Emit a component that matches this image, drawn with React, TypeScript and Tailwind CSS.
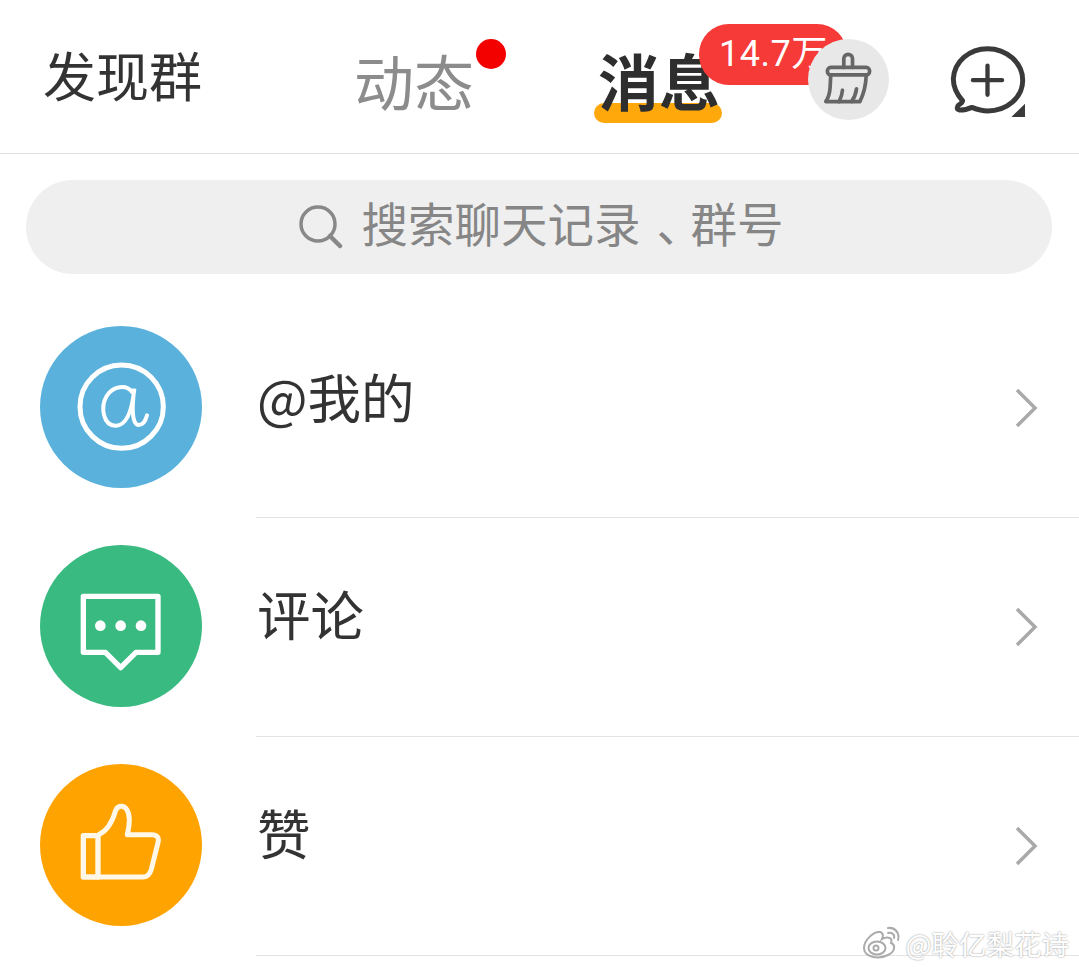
const font = "font-['Noto_Sans_CJK_SC','Noto_Sans',sans-serif]";

const ChevronIcon = () => (
    <svg width="24" height="42" viewBox="0 0 24 42" fill="none" className="mr-[41px] shrink-0">
        <path d="M3 3 L21 21 L3 39" stroke="#a9a9a9" strokeWidth="3.5" />
    </svg>
);

const AtIcon = () => (
    <svg viewBox="30 18 486 486" className="w-full h-full" fill="none" stroke="#fff">
        <circle cx="275" cy="260" r="125" strokeWidth="15" />
        <path
            d="M306 216 C290 194 250 196 230 228 C210 262 220 316 256 317 C288 318 306 276 313 206 C306 256 304 314 326 315 C338 315 347 302 351 286"
            strokeWidth="12"
            strokeLinecap="round"
        />
    </svg>
);

const CommentIcon = () => (
    <svg viewBox="30 28 486 486" className="w-full h-full" fill="none" stroke="#fff">
        <path d="M160 182 H384 V350 H318 L272 396 L226 350 H160 Z" strokeWidth="16" strokeLinejoin="round" />
        <g fill="#fff" stroke="none">
            <circle cx="211" cy="270" r="16" />
            <circle cx="272" cy="270" r="16" />
            <circle cx="333" cy="270" r="16" />
        </g>
    </svg>
);

const ThumbIcon = () => (
    <svg viewBox="30 28 486 486" className="w-full h-full" fill="none" stroke="#fff8e8" strokeLinejoin="round">
        <path d="M160 243 H204 V367 H160 Z" strokeWidth="16" />
        <path
            d="M204 367 H338 C352 367 360 358 364 344 L384 264 C388 248 380 240 366 240 H292 C300 205 300 178 290 164 C280 150 262 152 256 170 C248 198 236 226 206 240"
            strokeWidth="15"
            strokeLinecap="round"
        />
    </svg>
);

const BroomIcon = () => (
    <svg viewBox="385 87 242 242" className="w-full h-full" fill="none" stroke="#666" strokeWidth="11" strokeLinejoin="round" strokeLinecap="round">
        <path d="M492 172 V146 a13 13 0 0 1 26 0 V172" />
        <rect x="443" y="172" width="126" height="22" rx="10" />
        <path d="M453 195 L451 232 C450 250 446 262 438 274 H540 C552 250 558 225 559 195" />
        <path d="M478 274 C484 262 487 252 488 240 M515 274 C524 262 528 250 530 236" />
    </svg>
);

const PlusBubbleIcon = () => (
    <svg viewBox="800 100 250 235" className="w-[83px] h-[78px] shrink-0" fill="none">
        <path
            d="M847 274 C825 250 819 225 819 208 C822 155 868 117 922 117 C980 117 1028 160 1028 212 C1028 265 980 305 922 305 C905 305 890 300 875 294 C865 298 850 303 838 302 C828 300 830 292 835 287 C842 283 846 278 847 274 Z"
            stroke="#3a3a3a"
            strokeWidth="15"
            strokeLinejoin="round"
        />
        <path d="M878 212 H966 M922 168 V256" stroke="#3a3a3a" strokeWidth="13" strokeLinecap="round" />
        <path d="M994 323 L1035 283 V323 Z" fill="#3a3a3a" />
    </svg>
);

const WeiboIcon = () => (
    <svg viewBox="0 0 40 34" className="w-[40px] h-[34px] mr-[3px] shrink-0" fill="none" stroke="#ababab" strokeWidth="2" strokeLinecap="round">
        <path d="M2 22 C2 14 12 5 18 6 C22 7 21 11 20 13 C26 10 31 12 29 17 C34 19 33 26 26 29 C16 34 2 31 2 22 Z" />
        <ellipse cx="15" cy="22" rx="8.5" ry="6.5" />
        <circle cx="14" cy="22" r="2.5" />
        <path d="M26 2 C33 1 38 7 36 14 M26 7 C30 6 33 9 32 12" />
    </svg>
);

const rows = [
    { name: '@我的', bg: 'bg-[#5ab2dc]', icon: <AtIcon />, lift: 'pb-[24px]' },
    { name: '评论', bg: 'bg-[#38ba80]', icon: <CommentIcon />, lift: 'pb-[28px]' },
    { name: '赞', bg: 'bg-[#ffa300]', icon: <ThumbIcon />, lift: 'pb-[28px]' },
];

const App = () => {
    return (
        <div className={`relative w-[1079px] h-[967px] overflow-hidden bg-white text-[#333] ${font}`}>
            <header className="relative flex items-start h-[154px] border-b border-[#e3e3e3]">
                <h1 className="ml-[43px] mt-[35px] text-[53px] leading-[78px] font-normal text-[#333]">发现群</h1>

                <div className="relative ml-[152px] mt-[36px] text-[60px] leading-[88px] text-[#8c8c8c]">
                    动态
                    <span className="absolute left-[122px] top-[3px] w-[30px] h-[30px] rounded-full bg-[#f30000]" />
                </div>

                <div className="relative ml-[124px] mt-[36px] text-[61px] leading-[88px] font-bold text-[#2e2e2e]">
                    <span className="absolute left-[-4px] top-[67px] w-[128px] h-[20px] rounded-[10px] bg-[#ffa80b]" />
                    <span className="relative">消息</span>
                    <span className="absolute left-[101px] top-[-12px] w-[148px] h-[61px] rounded-[30px] bg-[#f53a38] pl-[20px] text-[36px] leading-[61px] font-normal tracking-[0.5px] text-white whitespace-nowrap font-['Roboto','Noto_Sans_CJK_SC',sans-serif]">
                        14.7万
                    </span>
                    <span className="absolute left-[210px] top-[3px] w-[81px] h-[81px] rounded-full bg-[#e8e8e8]">
                        <BroomIcon />
                    </span>
                </div>

                <div className="ml-auto mr-[49px] mt-[43px]">
                    <PlusBubbleIcon />
                </div>
            </header>

            <div className="px-[26px] pt-[26px] pb-[25px] pr-[27px]">
                <div className="flex items-center justify-center h-[94px] rounded-[47px] bg-[#efefef] pl-[2px] text-[#868686]">
                    <svg width="46" height="46" viewBox="0 0 46 46" fill="none" className="mr-[19px]">
                        <circle cx="21" cy="20" r="17" stroke="#888" strokeWidth="3.5" />
                        <path d="M33 32 L43 42" stroke="#888" strokeWidth="4.5" strokeLinecap="round" />
                    </svg>
                    <span className="pb-[10px] text-[46.5px] leading-[68px] whitespace-pre">
                        搜索聊天记录<span className="ml-[16px] tracking-[-12.5px]">、</span>群号
                    </span>
                </div>
            </div>

            <ul>
                {rows.map(({ name, bg, icon, lift }) => (
                    <li key={name} className="flex pl-[40px] h-[219px]">
                        <div className={`w-[162px] h-[162px] mt-[27px] rounded-full shrink-0 ${bg}`}>{icon}</div>
                        <div className="flex-1 flex items-center ml-[54px] border-b border-[#e3e3e3]">
                            <span className={`flex-1 pl-[1px] text-[53.5px] leading-[78px] text-[#333] ${lift}`}>{name}</span>
                            <ChevronIcon />
                        </div>
                    </li>
                ))}
            </ul>

            <div className="absolute right-[10px] bottom-[3px] flex items-center text-[27.5px] leading-[42px] text-white [text-shadow:0_0_2px_#888]">
                <WeiboIcon />
                @聆亿梨花诗
            </div>
        </div>
    );
};

export default App;
